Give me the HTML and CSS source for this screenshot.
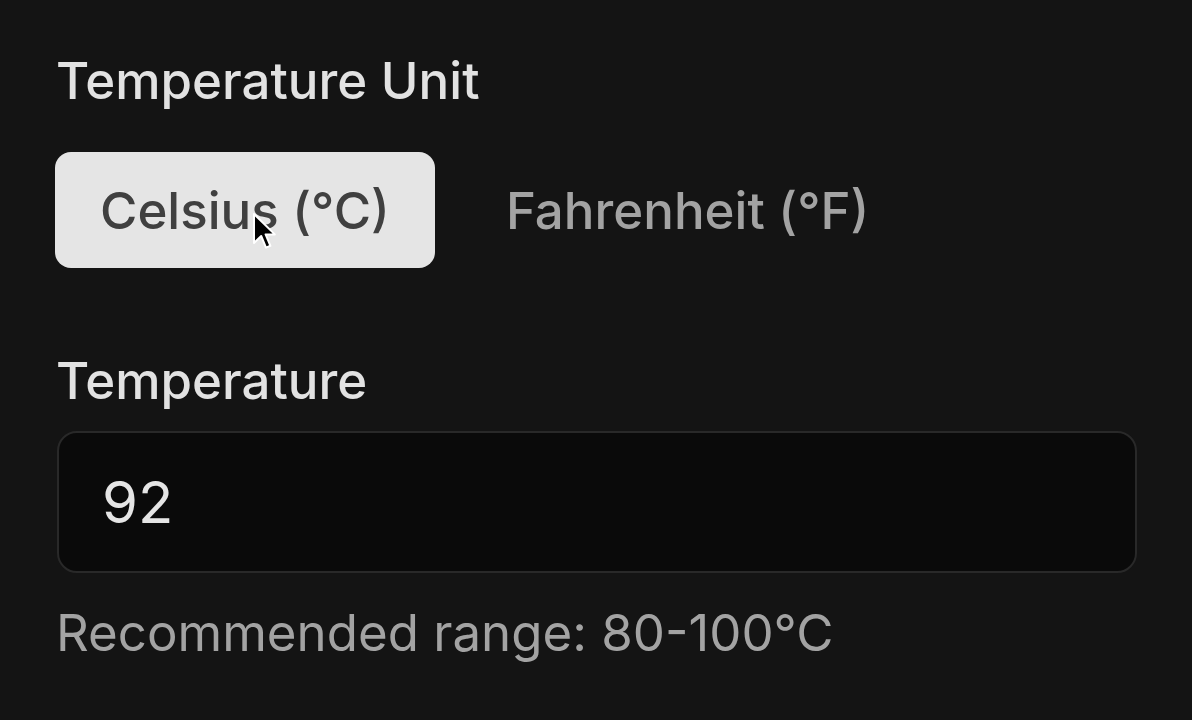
FILE: index.html
```html
<!DOCTYPE html>
<html lang="en">
<head>
  <meta charset="UTF-8">
  <meta name="viewport" content="width=device-width, initial-scale=1.0">
  <title>Temperature</title>
  <link rel="stylesheet" href="styles.css">
</head>
<body>
  <section class="field">
    <h2 class="label">Temperature Unit</h2>
    <div class="toggle">
      <button class="toggle-btn active">Celsius (°C)
        <svg class="cursor" width="24" height="38" viewBox="0 0 12 19">
          <path d="M1 1 L1 15.5 L4.6 12 L7 17.8 L9.2 16.9 L6.8 11.2 L11.4 11.2 Z" fill="#000" stroke="#fff" stroke-width="1" stroke-linejoin="round"/>
        </svg>
      </button>
      <button class="toggle-btn">Fahrenheit (°F)</button>
    </div>
  </section>

  <section class="field">
    <label class="label" for="temp">Temperature</label>
    <input id="temp" class="input" type="text" value="92">
    <p class="hint">Recommended range: 80-100°C</p>
  </section>
</body>
</html>
```

FILE: styles.css
```css
body {
  background-color: #141414;
  color: #e5e5e5;
  font-family: Inter, "Noto Sans", sans-serif;
  margin: 0;
  padding: 51px 55px 0 55px;
}

.field {
  display: flex;
  flex-direction: column;
  align-items: flex-start;
}

.field + .field {
  margin-top: 83px;
}

.label {
  display: block;
  margin: 0;
  font-size: 51px;
  font-weight: 500;
  line-height: 60px;
  color: #e2e2e2;
  padding-left: 1px;
}

.toggle {
  display: flex;
  gap: 26px;
  margin-top: 41px;
}

.toggle-btn {
  position: relative;
  font-family: inherit;
  font-size: 51px;
  font-weight: 500;
  color: #a3a3a3;
  background: transparent;
  border: none;
  border-radius: 16px;
  height: 116px;
  padding: 0 45px;
}

.toggle-btn.active {
  background-color: #e5e5e5;
  color: #404040;
}

.cursor {
  position: absolute;
  left: 197px;
  top: 60px;
}

.input {
  box-sizing: border-box;
  width: 1080px;
  height: 142px;
  margin: 20px 0 0 2px;
  background-color: #0a0a0a;
  border: 2px solid #292929;
  border-radius: 20px;
  color: #e5e5e5;
  font-family: inherit;
  font-size: 58px;
  padding: 0 43px;
  outline: none;
}

.hint {
  margin: 30px 0 0 1px;
  font-size: 51px;
  line-height: 60px;
  color: #a3a3a3;
}
```
